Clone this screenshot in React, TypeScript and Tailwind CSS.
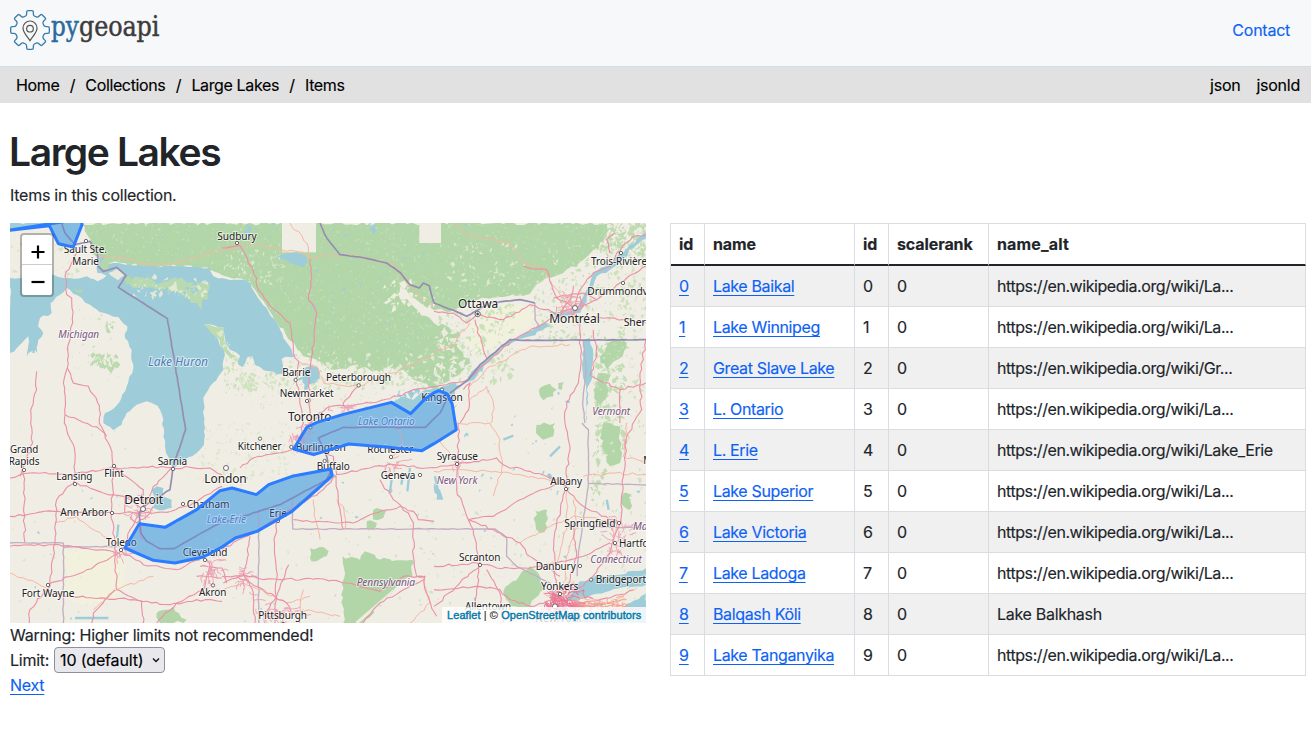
import React from "react";

type Pt = [number, number];

/* ---------- helpers for drawing the base map ---------- */

function rng(seed: number) {
  let s = seed;
  return () => {
    s = (s * 1664525 + 1013904223) % 4294967296;
    return s / 4294967296;
  };
}

function parse(p: string): Pt[] {
  return p.trim().split(/\s+/).map((q) => q.split(",").map(Number) as Pt);
}

/* Adds small wiggles to a polyline so that coasts and roads look surveyed. */
function wiggle(p: string, amp: number, seed: number, closed = false) {
  const pts = parse(p);
  if (closed) pts.push(pts[0]);
  const r = rng(seed);
  let d = `M${pts[0][0]},${pts[0][1]}`;
  for (let i = 1; i < pts.length; i++) {
    const [ax, ay] = pts[i - 1];
    const [bx, by] = pts[i];
    const n = Math.max(1, Math.round(Math.hypot(bx - ax, by - ay) / 14));
    for (let k = 1; k <= n; k++) {
      const t = k / n;
      const j = k === n ? 0 : amp;
      d += `L${(ax + (bx - ax) * t + (r() - 0.5) * j).toFixed(1)},${(ay + (by - ay) * t + (r() - 0.5) * j).toFixed(1)}`;
    }
  }
  return closed ? d + "Z" : d;
}

function specks(x: number, y: number, w: number, h: number, n: number, size: number, seed: number) {
  const r = rng(seed);
  let d = "";
  for (let i = 0; i < n; i++) {
    const a = x + r() * w;
    const b = y + r() * h;
    const s = size * (0.4 + r());
    d += `M${a.toFixed(0)},${b.toFixed(0)}l${(s * r()).toFixed(1)},${(-s * r()).toFixed(1)}l${(s * (r() - 0.2)).toFixed(1)},${(s * r()).toFixed(1)}l${(-s * r()).toFixed(1)},${(s * r()).toFixed(1)}z`;
  }
  return d;
}

/* ---------- map data, three units per pixel ---------- */

const FOREST = [
  "214,0 1800,0 1770,60 1720,110 1660,150 1600,170 1560,212 1480,222 1400,232 1330,262 1272,262 1225,235 1190,200 1170,190 1165,215 1225,262 1272,300 1310,310 1350,330 1340,370 1380,420 1350,450 1272,500 1200,460 1180,440 1100,442 1020,430 960,440 920,410 880,400 862,380 830,340 800,300 770,250 735,200 720,175 680,165 600,140 500,130 400,130 300,120 262,102 240,60",
  "262,100 285,98 300,130 280,150 268,130",
  "1510,110 1560,140 1480,200 1440,220 1450,170",
  "1810,350 1850,360 1838,400 1790,440 1770,400",
  "1765,450 1800,460 1790,520 1760,560 1750,500",
  "1780,600 1830,610 1830,720 1800,730 1775,670",
  "1590,495 1620,482 1640,500 1630,520 1600,532 1590,520",
  "1645,480 1662,478 1656,500 1645,498",
  "1580,605 1635,600 1630,640 1600,650 1578,630",
  "1576,864 1612,862 1612,912 1590,930 1576,900",
  "998,1000 1050,1010 1065,985 1080,990 1110,1010 1208,1010 1208,1060 1160,1090 1120,1130 1060,1200 1000,1200",
  "900,975 930,972 956,985 950,1000 920,1015 900,1005",
  "1090,860 1130,865 1120,885 1090,890",
  "1070,895 1100,900 1090,920 1070,915",
  "1480,1105 1560,1030 1590,1060 1600,1100 1560,1150 1500,1150",
  "1840,810 1865,815 1860,860 1840,850",
  "440,1170 490,1150 530,1190 520,1200 450,1200",
];

const FARM = [
  "1380,310 1440,250 1560,240 1580,280 1560,310 1480,350 1400,400 1370,370",
  "160,980 270,975 340,990 350,1100 300,1130 220,1150 160,1100",
];

const WATER = [
  "0,165 30,165 60,175 100,152 140,160 175,165 230,160 262,175 290,158 262,150 262,110 285,98 290,130 310,120 400,130 500,130 600,135 610,160 636,165 690,170 722,180 735,210 770,255 800,300 820,345 845,380 855,400 815,408 818,452 775,445 735,425 728,400 712,402 698,432 685,425 690,398 660,380 645,350 640,312 583,305 620,340 645,395 640,440 600,490 580,525 582,600 582,665 560,690 520,712 490,735 480,720 468,690 460,640 460,590 450,560 430,542 410,535 380,545 350,570 335,605 310,622 280,600 285,570 330,535 350,490 367,450 365,380 345,345 352,310 325,282 270,268 240,245 215,225 190,212 170,195 150,215 122,240 125,270 90,285 84,310 100,330 85,350 82,390 72,370 50,400 55,340 30,365 0,390",
  "0,22 118,8 145,62 190,72 216,5 214,0 0,0",
  "790,98 860,88 890,100 892,118 880,132 830,112",
  "880,440 900,430 925,435 930,465 915,480 895,484 893,500 882,500 878,465",
  "425,800 440,790 460,795 458,820 485,830 485,855 460,862 430,855 440,830",
  "345,975 390,905 465,915 560,862 630,803 666,795 739,815 776,785 846,760 955,738 978,758 926,800 846,865 741,925 676,945 636,975 580,1005 495,1020 430,1012",
  "851,678 891,612 961,583 1144,538 1180,520 1210,530 1250,500 1300,490 1340,480 1327,545 1334,600 1339,620 1272,662 1236,683 1136,673 1016,663 911,695",
  "1300,510 1370,470 1410,425 1450,390 1500,350 1560,325 1610,300 1620,310 1560,340 1515,355 1450,400 1400,460 1340,500",
  "1610,265 1650,268 1700,260 1730,200 1750,150 1790,130 1840,90 1880,50 1908,30 1908,45 1870,75 1800,140 1760,160 1740,210 1710,270 1650,285",
  "1720,350 1740,345 1750,390 1745,470 1730,500 1735,540 1727,600 1728,500 1718,450",
  "1668,1128 1700,1085 1755,1060 1830,1055 1908,1035 1908,1085 1850,1092 1760,1112 1690,1135",
  "1690,1200 1740,1172 1800,1168 1860,1140 1908,1112 1908,1200",
  "1272,780 1290,800 1300,830 1280,830",
];

const BORDERS = [
  "155,0 165,30 195,65 240,55 262,90 265,130 280,145 320,133 348,158 325,193 472,287 524,600 527,620 490,730 480,800 400,850 388,870 392,930 410,955 450,977 492,977 620,905 810,845 950,770 960,750 950,700 935,665 925,645 1000,613 1246,613 1290,570 1320,510 1375,470 1410,425 1500,350 1540,352 1908,350",
  "930,0 950,45 990,95 1050,102 1130,120 1172,150 1200,185 1228,195 1240,180 1258,188 1272,240 1330,262 1370,280 1440,240 1530,230 1575,240",
];

const STATE = [
  "0,960 160,960 160,1200",
  "160,973 330,970",
  "746,860 746,1200",
  "848,825 848,918 1455,918 1490,945 1490,1000 1520,1030 1620,1080",
  "1720,352 1728,440 1718,540 1725,600",
  "1716,600 1735,620 1735,780 1705,1000 1702,1060",
  "1735,781 1908,786",
  "1725,910 1908,915",
  "1575,240 1575,290 1590,312",
  "1620,1080 1640,1130 1620,1160",
];

const PINK = [
  "200,90 165,160 170,215 185,225 188,300 173,370 172,435 190,480 235,490 268,548 268,600 300,670 310,730 305,870 315,960 320,1100 395,1135 400,1200",
  "172,435 160,480 165,575 163,600 195,690 195,770 140,830 135,960 120,1090 60,1160 58,1200",
  "80,445 80,500 62,560 62,600 68,660 30,760",
  "165,575 270,620 290,640",
  "0,765 60,750 190,755 300,735 400,732 600,735 636,755",
  "0,880 130,865 300,868 400,870 470,868 550,840 636,790",
  "200,780 280,810 340,820 400,858",
  "305,730 400,800 400,858 360,920 335,985 400,1025 500,1040 570,1010",
  "0,970 130,965 330,990",
  "115,1085 230,1040 330,990",
  "160,1120 370,1130 480,1145 560,1130 636,1135",
  "440,1200 500,1140 580,1100 600,1030 590,1010",
  "40,740 45,960",
  "485,735 430,790 400,858",
  "315,1100 250,1170 245,1200",
  "636,75 690,68 706,95 740,165 740,190 780,250 840,300 850,390 866,415 858,470 880,600 870,640 850,680",
  "900,108 905,160 895,230 920,270 912,340 908,390 895,450 900,560 905,600",
  "850,678 900,600 950,555 1000,548 1100,538 1200,505 1320,480 1375,470 1450,400 1520,345 1640,280 1690,255",
  "1000,548 1000,540 1045,490",
  "690,735 730,705 850,678 930,680 970,700 980,755 1080,735 1150,725 1250,735 1340,725",
  "636,980 740,925 800,885 940,800 978,758",
  "978,758 985,830 1000,920",
  "800,895 793,980 800,1070 795,1200",
  "850,890 980,900 1030,900 1080,875 1170,850 1210,865 1225,890 1272,895",
  "1110,770 1150,830 1195,870 1210,900 1210,1000 1220,1060 1245,1060 1245,1100 1280,1180",
  "636,1060 700,1055 760,1070 940,1068 1010,1080 1110,1105 1180,1060 1240,1060",
  "720,940 710,1020 700,1050 730,1110 735,1200",
  "680,1060 760,1100 830,1140 870,1200",
  "760,1180 800,1120 836,1025",
  "1060,1200 1110,1140 1180,1100 1240,1070",
  "1340,725 1460,705 1490,730 1560,745 1640,770 1670,790",
  "1345,600 1345,720 1340,800 1375,890 1390,920 1410,1020 1400,1100 1390,1180",
  "1375,890 1450,880 1530,830 1670,770",
  "1375,890 1450,920 1530,960 1560,1000 1650,1060",
  "1670,790 1640,900 1630,980 1640,1100",
  "1670,800 1720,850 1800,890 1830,900",
  "1710,300 1712,400 1705,480 1670,540 1665,600 1680,680 1665,790",
  "1272,265 1330,270 1370,300 1402,275 1480,290 1560,245 1640,272 1700,255",
  "1395,290 1420,380 1430,405",
  "1700,255 1640,225 1610,140 1540,130",
  "1695,255 1710,200 1750,150 1800,130 1820,90 1870,40 1908,35",
  "1800,90 1790,50 1815,30",
  "1700,255 1760,230 1830,180 1908,130",
  "1710,280 1840,290 1908,300",
  "1740,460 1760,400 1750,320",
  "1745,460 1830,500 1908,480",
  "1830,500 1830,600",
  "1908,350 1890,450 1895,560 1850,640 1840,760 1830,900 1800,990 1740,1070 1660,1130",
  "1272,1030 1400,1020 1460,1035 1540,1035 1640,1020 1720,1000 1800,960",
  "1272,1100 1400,1090 1470,1100 1500,1130 1560,1150 1640,1130",
  "1272,1150 1350,1080 1410,1030",
  "1430,1040 1470,1110 1480,1200",
  "1660,1130 1700,1000 1690,900",
  "1360,500 1380,480 1376,560 1350,600",
  "640,1080 690,1060 740,1060",
  "1660,1130 1720,1140 1800,1125 1870,1100",
  "1650,1145 1700,1155 1780,1145",
  "1630,225 1680,215 1720,210 1760,230",
  "1650,270 1680,230 1690,190",
  "1680,280 1720,250 1710,220",
  "360,880 380,900 410,880 430,850",
  "345,870 345,820 400,830",
  "570,1030 636,1035 650,1080",
  "560,1060 636,1065",
];

const ORANGE = [
  "265,98 330,103 400,122 500,120 560,102 636,82 730,62 830,85 880,88 905,105 1000,95 1060,105 1150,125 1190,180 1272,260",
  "840,0 890,60 895,100",
  "865,415 920,430 940,480 1050,490 1150,450 1272,395",
  "1330,0 1380,40 1500,60 1540,120 1600,140 1650,215 1690,250",
  "1272,385 1330,370 1350,330 1380,300",
  "1380,490 1440,430 1500,400 1560,370 1680,365",
  "1380,530 1430,490 1450,540 1445,600",
  "0,1050 80,1080 160,1120",
  "135,900 200,880 280,940 330,960",
  "910,830 920,900 930,950",
  "980,830 1000,850 1005,920",
  "1340,600 1440,600 1470,650 1475,740 1450,820",
  "1272,745 1360,740 1500,750 1650,780",
  "1670,800 1670,920 1640,1020",
  "1690,830 1700,900 1670,1000 1660,1120",
  "1720,760 1800,750 1908,755",
  "1530,960 1640,900 1700,880 1830,900",
  "1272,630 1320,690 1340,720",
  "640,1100 700,1080 830,1140 900,1120",
  "1160,600 1180,660 1145,700",
  "880,1100 870,1160 990,1180",
  "1850,600 1840,700 1908,720",
  "250,1160 320,1100 430,1060",
  "1240,1060 1260,1140 1200,1200",
  "1600,1110 1700,1150 1850,1130",
  "1690,1120 1800,1140 1880,1095",
];

type Label = { t: string; x: number; y: number; w: number; s?: number; k?: "state" | "lake" };

/* x is the left edge and y the baseline, in map units. */
const LABELS: Label[] = [
  { t: "Sault Ste.", x: 161, y: 90, w: 130 },
  { t: "Marie", x: 187, y: 125, w: 79 },
  { t: "Sudbury", x: 622, y: 50, w: 118 },
  { t: "Michigan", x: 145, y: 346, w: 122, k: "state" },
  { t: "Lake Huron", x: 414, y: 428, w: 180, s: 36, k: "lake" },
  { t: "Barrie", x: 817, y: 458, w: 84 },
  { t: "Peterborough", x: 948, y: 475, w: 195 },
  { t: "Newmarket", x: 809, y: 522, w: 162 },
  { t: "Toronto", x: 834, y: 595, w: 130, s: 37 },
  { t: "Ottawa", x: 1344, y: 254, w: 120, s: 37 },
  { t: "Montréal", x: 1618, y: 299, w: 151, s: 37 },
  { t: "Trois-Rivières", x: 1743, y: 125, w: 182 },
  { t: "Drummondville", x: 1732, y: 215, w: 222 },
  { t: "Sherbrooke", x: 1841, y: 309, w: 168 },
  { t: "Kingston", x: 1234, y: 535, w: 124 },
  { t: "Vermont", x: 1747, y: 577, w: 113, k: "state" },
  { t: "Grand", x: 0, y: 691, w: 85 },
  { t: "Rapids", x: -4, y: 727, w: 92 },
  { t: "Lansing", x: 139, y: 771, w: 108 },
  { t: "Flint", x: 283, y: 763, w: 58 },
  { t: "Sarnia", x: 443, y: 725, w: 88 },
  { t: "Detroit", x: 343, y: 842, w: 116, s: 37 },
  { t: "Ann Arbor", x: 151, y: 880, w: 143 },
  { t: "Chatham", x: 530, y: 854, w: 128 },
  { t: "London", x: 583, y: 779, w: 127, s: 37 },
  { t: "Toledo", x: 288, y: 969, w: 92 },
  { t: "Cleveland", x: 518, y: 998, w: 134 },
  { t: "Akron", x: 567, y: 1118, w: 82 },
  { t: "Fort Wayne", x: 35, y: 1121, w: 158 },
  { t: "Lake Erie", x: 590, y: 901, w: 118, k: "lake" },
  { t: "Lake Ontario", x: 1044, y: 606, w: 170, k: "lake" },
  { t: "Kitchener", x: 683, y: 682, w: 132 },
  { t: "Burlington", x: 857, y: 683, w: 150 },
  { t: "Buffalo", x: 920, y: 742, w: 99 },
  { t: "Rochester", x: 1072, y: 691, w: 138 },
  { t: "Geneva", x: 1112, y: 769, w: 104 },
  { t: "Erie", x: 778, y: 882, w: 52 },
  { t: "Pennsylvania", x: 1040, y: 1088, w: 175, k: "state" },
  { t: "Pittsburgh", x: 745, y: 1189, w: 146 },
  { t: "Syracuse", x: 1280, y: 712, w: 124 },
  { t: "New York", x: 1280, y: 783, w: 122, k: "state" },
  { t: "Albany", x: 1621, y: 786, w: 95 },
  { t: "Springfield", x: 1663, y: 911, w: 153 },
  { t: "Massachusetts", x: 1869, y: 920, w: 200, k: "state" },
  { t: "Manchester", x: 1900, y: 722, w: 160 },
  { t: "Hartford", x: 1827, y: 972, w: 118 },
  { t: "Connecticut", x: 1741, y: 1019, w: 154, k: "state" },
  { t: "Scranton", x: 1347, y: 1014, w: 124 },
  { t: "Danbury", x: 1577, y: 1040, w: 120 },
  { t: "Bridgeport", x: 1757, y: 1081, w: 151 },
  { t: "Yonkers", x: 1593, y: 1101, w: 112 },
  { t: "Allentown", x: 1365, y: 1160, w: 138 },
  { t: "New York", x: 1575, y: 1196, w: 140, s: 36 },
];

const DOTS: Pt[] = [
  [228, 54], [681, 60], [857, 471], [1046, 487], [891, 534], [901, 613], [1833, 90], [1839, 180], [1296, 500],
  [42, 741], [195, 783], [312, 729], [489, 738], [306, 870], [519, 843], [333, 981], [585, 1011],
  [609, 1087], [114, 1086], [750, 647], [844, 672], [944, 714], [1143, 702], [1230, 756], [1341, 723], [1668, 798],
  [1827, 900], [1815, 960], [1410, 1026], [1710, 1029], [1743, 1070], [1650, 1113], [804, 894], [819, 1203],
];
const BIG_DOTS: Pt[] = [[399, 858], [648, 735], [1695, 255], [1635, 1150]];

const LAKES = [
  "-20,24 118,8 145,62 190,72 216,5 214,-12",
  "851,678 891,612 921,598 1000,574 1144,538 1202,572 1246,527 1274,508 1286,503 1312,513 1327,545 1334,590 1339,620 1272,662 1236,683 1136,673 1016,663 911,695",
  "345,975 388,902 465,913 560,860 630,803 666,795 739,815 776,785 846,760 963,738 966,758 926,795 846,865 741,925 676,945 636,972 580,1002 495,1020 430,1012",
];

/* A tangle of short streets around a city. */
function metro(cx: number, cy: number, w: number, h: number, n: number, seed: number) {
  const q = rng(seed);
  let d = "";
  for (let i = 0; i < n; i++) {
    let x = cx + (q() + q() - 1) * w;
    let y = cy + (q() + q() - 1) * h;
    d += `M${x.toFixed(1)},${y.toFixed(1)}`;
    const steps = 2 + Math.floor(q() * 3);
    const across = q() > 0.5;
    for (let k = 0; k < steps; k++) {
      x += (q() - (across ? 0 : 0.5)) * (across ? 16 : 12);
      y += (q() - (across ? 0.5 : 0)) * (across ? 12 : 16);
      d += `L${x.toFixed(1)},${y.toFixed(1)}`;
    }
  }
  return d;
}

function BaseMap() {
  return (
    <svg className="block h-[400px] w-[636px]" viewBox="0 0 1908 1200">
      <defs>
        <clipPath id="forest">
          {FOREST.map((p, i) => (
            <path key={i} d={wiggle(p, 14, i + 7, true)} />
          ))}
        </clipPath>
      </defs>
      <rect width="1908" height="1200" fill="#f0ede5" />
      {FARM.map((p, i) => (
        <path key={i} d={wiggle(p, 24, i + 3, true)} fill="#f1f1de" />
      ))}
      <path d={specks(640, 390, 640, 110, 420, 10, 22)} fill="#cbe1b9" />
      <path d={specks(640, 450, 560, 110, 120, 8, 43)} fill="#d5e5c5" />
      <path d={specks(1272, 250, 240, 230, 330, 10, 23)} fill="#cbe1b9" />
      <path d={specks(1560, 60, 348, 290, 420, 9, 24)} fill="#cbe1b9" />
      <path d={specks(1760, 0, 148, 90, 240, 11, 54)} fill="#bfdcb1" />
      <path d={specks(0, 60, 200, 110, 60, 9, 25)} fill="#d2e4c2" />
      <path d={specks(160, 250, 190, 220, 50, 6, 26)} fill="#cfe3bd" />
      <path d={specks(235, 395, 80, 40, 60, 12, 44)} fill="#bbdaae" />
      <path d={specks(285, 302, 18, 20, 14, 9, 45)} fill="#bbdaae" />
      <path d={specks(680, 450, 50, 50, 40, 9, 46)} fill="#cde2bd" />
      <path d={specks(1750, 350, 90, 370, 210, 12, 27)} fill="#c3ddb2" />
      <path d={specks(1840, 350, 68, 500, 60, 9, 47)} fill="#cfe2be" />
      <path d={specks(1735, 740, 50, 110, 30, 10, 48)} fill="#c3ddb2" />
      <path d={specks(560, 600, 300, 180, 190, 8, 28)} fill="#dbe8cb" />
      <path d={specks(1000, 860, 908, 300, 170, 8, 29)} fill="#d3e4c4" />
      <path d={specks(0, 600, 1908, 600, 260, 6, 30)} fill="#d9e6cc" />
      {FOREST.map((p, i) => (
        <path key={i} d={wiggle(p, 14, i + 7, true)} fill="#b3d6a8" />
      ))}
      <g clipPath="url(#forest)">
        <path d={specks(200, 0, 1700, 500, 3600, 5, 31)} fill="#c6e0bb" />
        <path d={specks(200, 0, 1700, 500, 480, 6, 32)} fill="#a3cfd2" />
        <path d={specks(640, 390, 640, 110, 200, 12, 33)} fill="#e2e9d3" />
        <path d={specks(1300, 60, 600, 200, 170, 9, 35)} fill="#dde8cf" />
        <path d={specks(640, 80, 180, 100, 80, 8, 36)} fill="#dde8cf" />
        <path d={specks(1120, 180, 160, 80, 40, 14, 49)} fill="#eeeede" />
        <path d={specks(1272, 270, 110, 230, 110, 14, 50)} fill="#eaebdc" />
        <path d={specks(1740, 330, 168, 400, 60, 9, 34)} fill="#dfe9d2" />
        <path
          d="M1040,1200L1150,1105L1215,1080M1070,1200L1160,1130L1220,1105M1110,1200L1170,1150L1215,1130"
          stroke="#eeecdf"
          strokeWidth="9"
          fill="none"
        />
      </g>
      <rect x="816" y="0" width="102" height="88" fill="#f0ede5" />
      <rect x="1228" y="0" width="65" height="60" fill="#f0ede5" />
      {WATER.map((p, i) => (
        <path key={i} d={wiggle(p, 8, i + 50, true)} fill="#9ecdd9" />
      ))}
      <path d={specks(1070, 0, 25, 20, 8, 14, 51)} fill="#9ecdd9" />
      <path d={specks(700, 0, 25, 25, 10, 16, 52)} fill="#9ecdd9" />
      <path d={specks(0, 600, 1908, 600, 90, 7, 41)} fill="#a8d0dc" />
      <path d={specks(1272, 500, 400, 350, 30, 9, 42)} fill="#9ecdd9" />
      <path d={specks(1155, 500, 90, 40, 24, 12, 53)} fill="#9ecdd9" />
      <path
        d="M1180,750l-6,35M1200,735l-8,70M1145,770l-6,40M1275,760l12,60M1620,700l30,-30M60,380l10,-70M70,390l8,-50M325,905l-4,40M195,1185h100M1790,830l6,30M1480,650l30,-12M865,470l20,-8"
        stroke="#9ecdd9"
        strokeWidth="7"
        fill="none"
      />
      <path d={specks(355, 165, 60, 20, 26, 12, 87)} fill="#bfdcae" />
      <path d={wiggle("350,165 400,168 450,180 500,168 545,178 598,180 592,210 575,262 560,240 520,220 480,206 420,192 360,186", 16, 81, true)} fill="#b9dab0" />
      <path d={specks(360, 165, 220, 60, 60, 11, 82)} fill="#e3e9d4" />
      <path d={specks(400, 160, 190, 50, 24, 10, 88)} fill="#9ecdd9" />
      <path d={wiggle("265,130 285,100 300,112 292,140", 6, 83, true)} fill="#b3d7a9" />
      <path d={wiggle("295,150 320,138 345,155 325,172", 6, 84, true)} fill="#e8ebdc" />
      <path d={wiggle("340,165 360,160 368,178 350,186", 6, 89, true)} fill="#b3d7a9" />
      <path d={wiggle("190,198 215,200 218,210 200,208", 4, 85, true)} fill="#b3d7a9" />
      <path d={wiggle("583,305 640,312 642,350 655,380 680,400 662,405 640,380 620,340", 8, 86, true)} fill="#bcdbae" />
      <path d={specks(615, 318, 22, 30, 8, 9, 90)} fill="#e3e9d4" />
      <path d={specks(635, 360, 25, 50, 10, 9, 91)} fill="#e3e9d4" />
      {STATE.map((p, i) => (
        <path key={i} d={wiggle(p, 3, i + 120)} stroke="#c3afc4" strokeWidth="4" fill="none" />
      ))}
      {ORANGE.map((p, i) => (
        <path key={i} d={wiggle(p, 8, i + 160)} stroke="#f7b7a3" strokeWidth="3" fill="none" />
      ))}
      {PINK.map((p, i) => (
        <path key={i} d={wiggle(p, 7, i + 200)} stroke="#ea91a5" strokeWidth="3.3" fill="none" />
      ))}
      <g stroke="#ec9fb0" strokeWidth="2.6" fill="none">
        <path d={metro(1650, 1135, 75, 55, 110, 5)} stroke="#ea7895" strokeWidth="3" />
        <path d={metro(1770, 1145, 110, 22, 60, 6)} stroke="#f2a08f" />
        <path d={metro(1680, 245, 55, 40, 30, 7)} />
        <path d={metro(375, 860, 45, 50, 26, 8)} />
        <path d={metro(610, 1050, 45, 60, 26, 9)} />
        <path d={metro(865, 645, 30, 50, 24, 10)} />
        <path d={metro(805, 1170, 80, 45, 32, 11)} />
        <path d={metro(700, 1070, 50, 50, 16, 16)} />
        <path d={metro(1820, 940, 60, 70, 34, 12)} />
        <path d={metro(325, 985, 25, 25, 12, 13)} />
        <path d={metro(1345, 720, 20, 20, 10, 14)} />
        <path d={metro(1145, 720, 25, 20, 12, 15)} />
        <path d={metro(1000, 555, 60, 12, 14, 17)} />
      </g>
      {BORDERS.map((p, i) => (
        <path key={i} d={wiggle(p, 1.5, i + 90)} stroke="#958db0" strokeWidth="5" fill="none" strokeLinejoin="round" />
      ))}
      <g fill="#fff" stroke="#555" strokeWidth="2.6">
        {DOTS.map(([x, y], i) => (
          <circle key={i} cx={x} cy={y} r="5" />
        ))}
        {BIG_DOTS.map(([x, y], i) => (
          <circle key={i} cx={x} cy={y} r="7.5" />
        ))}
        <circle cx="1403" cy="273" r="8" />
        <circle cx="1403" cy="273" r="3" fill="#333" />
      </g>
      <g fontFamily="'Noto Sans', sans-serif" stroke="#fff" strokeOpacity="0.6" strokeWidth="6" strokeLinejoin="round" paintOrder="stroke">
        {LABELS.map((l, i) => (
          <text
            key={i}
            x={l.x}
            y={l.y}
            textLength={l.w}
            lengthAdjust="spacingAndGlyphs"
            fontSize={l.s ?? 31}
            fontStyle={l.k ? "italic" : "normal"}
            fill={l.k === "state" ? "#7c5580" : l.k === "lake" ? "#4f7fb8" : "#222"}
          >
            {l.t}
          </text>
        ))}
      </g>
      <g fill="#3388ff" fillOpacity="0.25" stroke="#2b7cff" strokeWidth="9" strokeLinejoin="round">
        {LAKES.map((p, i) => (
          <polygon key={i} points={p} />
        ))}
      </g>
    </svg>
  );
}

/* ---------- logo ---------- */

function gearPath() {
  let d = "";
  for (let i = 0; i < 8; i++) {
    const a = (i * Math.PI) / 4;
    const p = (x: number, y: number) =>
      `${(60 + x * Math.cos(a) + y * Math.sin(a)).toFixed(2)},${(60 + x * Math.sin(a) - y * Math.cos(a)).toFixed(2)}`;
    d += `${i ? "L" : "M"}${p(-13, 42)}Q${p(-10, 44)} ${p(-10, 49)}L${p(-10, 54)}Q${p(-10, 58)} ${p(-6, 58)}L${p(6, 58)}Q${p(10, 58)} ${p(10, 54)}L${p(10, 49)}Q${p(10, 44)} ${p(13, 42)}`;
  }
  return d + "Z";
}

function Logo() {
  return (
    <svg className="block h-10 w-[152px]" viewBox="0 0 456 120" aria-label="pygeoapi">
      <path d={gearPath()} fill="none" stroke="#367fae" strokeWidth="4" strokeLinejoin="round" />
      <path d="M60 92C52 79 39 68 39 54a21 21 0 0 1 42 0C81 68 68 79 60 92Z" fill="none" stroke="#555" strokeWidth="3.6" />
      <circle cx="60" cy="56" r="10" fill="none" stroke="#555" strokeWidth="3.6" />
      <g fontFamily="'DejaVu Serif Condensed', 'DejaVu Serif', serif" fontSize="82" strokeWidth="1.4">
        <text x="123" y="77" fill="#2a6a9e" stroke="#2a6a9e" textLength="83" lengthAdjust="spacingAndGlyphs">
          py
        </text>
        <text x="207" y="77" fill="#3c3c3b" stroke="#3c3c3b" textLength="241" lengthAdjust="spacingAndGlyphs">
          geoapi
        </text>
      </g>
    </svg>
  );
}

/* ---------- page ---------- */

const ROWS: [string, string][] = [
  ["Lake Baikal", "https://en.wikipedia.org/wiki/La..."],
  ["Lake Winnipeg", "https://en.wikipedia.org/wiki/La..."],
  ["Great Slave Lake", "https://en.wikipedia.org/wiki/Gr..."],
  ["L. Ontario", "https://en.wikipedia.org/wiki/La..."],
  ["L. Erie", "https://en.wikipedia.org/wiki/Lake_Erie"],
  ["Lake Superior", "https://en.wikipedia.org/wiki/La..."],
  ["Lake Victoria", "https://en.wikipedia.org/wiki/La..."],
  ["Lake Ladoga", "https://en.wikipedia.org/wiki/La..."],
  ["Balqash Köli", "Lake Balkhash"],
  ["Lake Tanganyika", "https://en.wikipedia.org/wiki/La..."],
];

const CRUMBS = ["Home", "Collections", "Large Lakes", "Items"];
const LINK = "text-[#0d62f5] underline decoration-1 underline-offset-[3px]";

function LakeMap() {
  return (
    <div className="relative h-[400px] w-[636px] overflow-hidden bg-[#f0ede5]">
      <BaseMap />
      <div className="absolute left-[10px] top-[10px] w-[34px] rounded-[4px] border-2 border-black/25 bg-white bg-clip-padding">
        <button className="flex h-[30px] w-full items-center justify-center border-b border-[#ccc] pl-[2px] pt-1" aria-label="Zoom in">
          <svg className="h-[14px] w-[14px]" viewBox="0 0 14 14" stroke="#000" strokeWidth="2.2">
            <path d="M.5 7h13M7 .5v13" />
          </svg>
        </button>
        <button className="flex h-[30px] w-full items-center justify-center pl-[2px] pt-1" aria-label="Zoom out">
          <svg className="h-[14px] w-[14px]" viewBox="0 0 14 14" stroke="#000" strokeWidth="2.2">
            <path d="M.5 7h13" />
          </svg>
        </button>
      </div>
      <div className="absolute bottom-0 right-0 flex h-4 w-[204px] items-center whitespace-pre bg-white/80 pl-[5px] font-['Liberation_Sans',Arial,sans-serif] text-[11px] tracking-[0.08px] text-[#333]">
        <a className="text-[#0078a8] [-webkit-text-stroke:0.4px_#0078a8]">Leaflet</a>
        {" | © "}
        <a className="text-[#0078a8] [-webkit-text-stroke:0.4px_#0078a8]">OpenStreetMap contributors</a>
      </div>
    </div>
  );
}

export default function App() {
  return (
    <div className="h-[729px] w-[1311px] overflow-hidden bg-white font-[Inter,sans-serif] text-base leading-6 tracking-[-0.26px] text-[#212529] [-webkit-text-stroke:0.15px]">
      <header className="flex h-[67px] items-start justify-between border-b border-[#d6dee4] bg-[#f7f8fa] pl-[10px] pr-[21px] pt-[10px]">
        <Logo />
        <a className="pt-2 tracking-[-0.25px] text-[#0d62f5]">Contact</a>
      </header>
      <nav className="flex h-9 items-center justify-between bg-[#e1e1e1] pl-4 pr-[11px] text-black">
        <div className="flex tracking-[-0.37px]">
          {CRUMBS.map((c, i) => (
            <React.Fragment key={c}>
              {i > 0 && <span className="w-[26px] text-center">/</span>}
              <a>{c}</a>
            </React.Fragment>
          ))}
        </div>
        <div className="flex gap-4 tracking-[-0.25px]">
          <a>json</a>
          <a>jsonld</a>
        </div>
      </nav>
      <main className="px-[10px] pt-[25px]">
        <h1 className="-ml-px h-12 text-[39px] font-semibold leading-[48px] tracking-[-1.4px] [-webkit-text-stroke:0]">Large Lakes</h1>
        <p className="mt-[7px] h-10">Items in this collection.</p>
        <div className="flex gap-6">
          <section className="w-[636px] shrink-0">
            <LakeMap />
            <div>Warning: Higher limits not recommended!</div>
            <div className="flex h-[26px] items-center gap-[5px]">
              <label>Limit:</label>
              <div className="relative">
                <select className="block h-[26px] w-[111px] appearance-none rounded-[4px] border border-[#8f8f9d] bg-[#e9e9ed] pl-[5px] leading-6 tracking-[-0.15px] text-black">
                  <option>10 (default)</option>
                </select>
                <svg className="pointer-events-none absolute right-[5px] top-[9px] h-2 w-2" viewBox="0 0 8 8" fill="none" stroke="#111" strokeWidth="1.3">
                  <path d="M1 2.5l3 3 3-3" />
                </svg>
              </div>
            </div>
            <a className={LINK}>Next</a>
          </section>
          <table className="w-[636px] table-fixed border-separate border-spacing-0 self-start border-l border-t border-[#d9dde1]">
            <colgroup>
              <col className="w-[34px]" />
              <col className="w-[150px]" />
              <col className="w-[34px]" />
              <col className="w-[100px]" />
              <col className="w-[317px]" />
            </colgroup>
            <thead>
              <tr className="h-[42px] text-left tracking-[-0.1px]">
                {["id", "name", "id", "scalerank", "name_alt"].map((h, i) => (
                  <th key={i} className="border-b-2 border-r border-b-[#212529] border-r-[#d9dde1] px-2 py-0 font-bold last:tracking-[0.15px]">
                    {h}
                  </th>
                ))}
              </tr>
            </thead>
            <tbody>
              {ROWS.map(([name, alt], i) => (
                <tr key={name} className="h-[41px] odd:bg-[#f0f0f0] [&>td]:border-b [&>td]:border-r [&>td]:border-[#d9dde1] [&>td]:px-2 [&>td]:py-0">
                  <td>
                    <a className={LINK}>{i}</a>
                  </td>
                  <td className="whitespace-nowrap tracking-[-0.36px]">
                    <a className={LINK}>{name}</a>
                  </td>
                  <td>{i}</td>
                  <td>0</td>
                  <td className={alt.startsWith("http") ? "tracking-[-0.43px]" : "tracking-[-0.3px]"}>{alt}</td>
                </tr>
              ))}
            </tbody>
          </table>
        </div>
      </main>
    </div>
  );
}
